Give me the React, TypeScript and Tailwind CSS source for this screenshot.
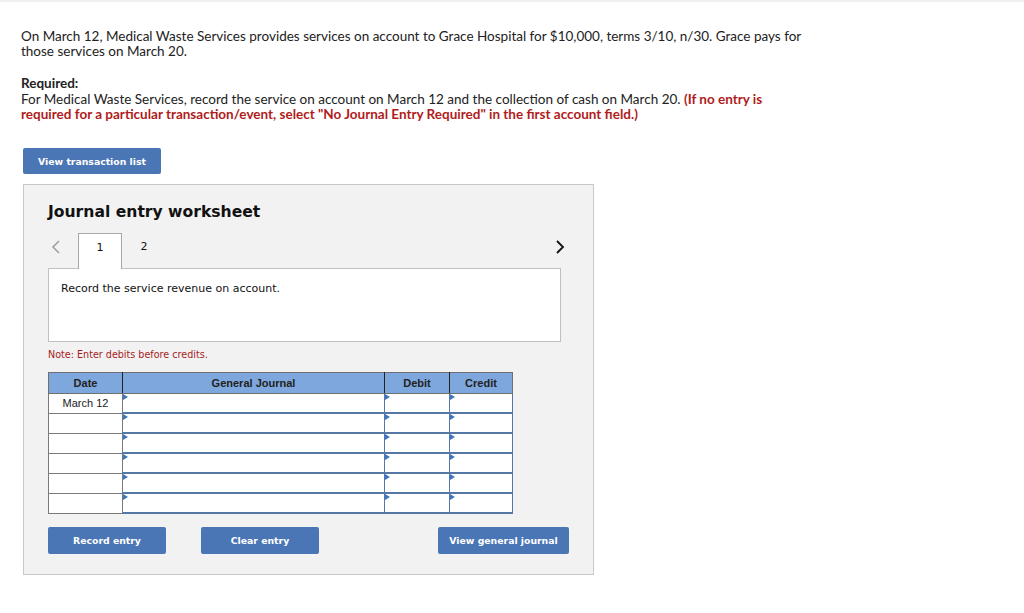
import React from "react";

const rows = ["March 12", "", "", "", "", ""];

function Marker() {
  return (
    <span className="absolute left-0 top-0 h-0 w-0 border-y-[3px] border-l-[5px] border-y-transparent border-l-[#3f74c0]" />
  );
}

function InputCell({ w }: { w: string }) {
  return (
    <td className={`${w} relative h-5 p-0 border-x border-b-2 border-t border-[#5577a6] bg-white`}>
      <Marker />
    </td>
  );
}

export default function App() {
  return (
    <div className="min-h-[613px] bg-white border-t-2 border-[#f0f0f0] font-['Lato',sans-serif] text-[#222]">
      <div className="px-[21px] pt-[27px]">
        <p className="w-[790px] text-[13.5px] leading-[15px]">
          On March 12, Medical Waste Services provides services on account to Grace Hospital for $10,000, terms 3/10, n/30. Grace pays for
          those services on March 20.
        </p>
        <div className="mt-[17px] w-[790px] text-[13.5px] leading-[15.5px]">
          <div className="font-bold">Required:</div>
          <p>
            For Medical Waste Services, record the service on account on March 12 and the collection of cash on March 20.{" "}
            <span className="font-bold text-[#b01c1c]">
              (If no entry is required for a particular transaction/event, select "No Journal Entry Required" in the first account field.)
            </span>
          </p>
        </div>
      </div>

      <div className="pl-[23px] pt-[24px]">
        <button className="h-[26px] w-[138px] rounded-[2px] bg-[#4a76b5] font-['DejaVu_Sans',sans-serif] text-[9.3px] font-bold text-white">
          View transaction list
        </button>

        <div className="mt-[10px] w-[571px] border border-[#c8c8c8] bg-[#f2f2f2] px-6 pb-[20px] pt-[17px] font-['DejaVu_Sans',sans-serif]">
          <h2 className="text-[15.6px] font-bold leading-5 text-[#111]">Journal entry worksheet</h2>

          <div className="mt-[11px] flex w-[513px] items-end">
            <span className="flex h-[34px] w-[30px] items-start pl-[3px] pt-[5px]">
              <svg width="10" height="16" viewBox="0 0 10 16"><path d="M8 2 L2 8 L8 14" fill="none" stroke="#a0a0a0" strokeWidth="1.6" /></svg>
            </span>
            <div className="relative z-10 -mb-px flex h-[36px] w-[44px] items-start justify-center border border-b-0 border-[#a8a8a8] bg-white pt-[6px] text-[11px] text-[#111]">
              1
            </div>
            <div className="flex h-[34px] w-[44px] items-start justify-center pt-[5px] text-[11px] text-[#111]">2</div>
            <div className="flex-1" />
            <span className="mr-[-4px] flex h-[34px] items-start pt-[5px]">
              <svg width="10" height="16" viewBox="0 0 10 16"><path d="M2 2 L8 8 L2 14" fill="none" stroke="#111" strokeWidth="1.8" /></svg>
            </span>
          </div>

          <div className="h-[74px] w-[513px] border border-[#c0c0c0] bg-white px-3 pt-[12px] text-[11px] text-[#111]">
            Record the service revenue on account.
          </div>

          <div className="mt-[6px] text-[9.6px] text-[#a61d1d]">Note: Enter debits before credits.</div>

          <table className="mt-[9px] border-collapse font-['Liberation_Sans',Arial,sans-serif] text-[11px]">
            <thead>
              <tr className="h-[21px] bg-[#7ea8dd] font-bold text-[#222]">
                <th className="w-[74px] border border-[#6f6f6f] border-r-[#222] font-bold">Date</th>
                <th className="w-[262px] border border-[#6f6f6f] border-r-[#222] font-bold">General Journal</th>
                <th className="w-[65px] border border-[#6f6f6f] border-r-[#222] font-bold">Debit</th>
                <th className="w-[63px] border border-[#6f6f6f] font-bold">Credit</th>
              </tr>
            </thead>
            <tbody>
              {rows.map((d, i) => (
                <tr key={i} className="h-5">
                  <td className="w-[74px] border border-[#7a7a7a] bg-white p-0 text-center text-[#222]">{d}</td>
                  <InputCell w="w-[262px]" />
                  <InputCell w="w-[65px]" />
                  <InputCell w="w-[63px]" />
                </tr>
              ))}
            </tbody>
          </table>

          <div className="mt-[13px] flex w-[521px] items-center text-[9.3px] font-bold text-white">
            <button className="h-[27px] w-[118px] rounded-[2px] bg-[#4a76b5]">Record entry</button>
            <button className="ml-[35px] h-[27px] w-[118px] rounded-[2px] bg-[#4a76b5]">Clear entry</button>
            <div className="flex-1" />
            <button className="h-[27px] w-[131px] rounded-[2px] bg-[#4a76b5]">View general journal</button>
          </div>
        </div>
      </div>
    </div>
  );
}
